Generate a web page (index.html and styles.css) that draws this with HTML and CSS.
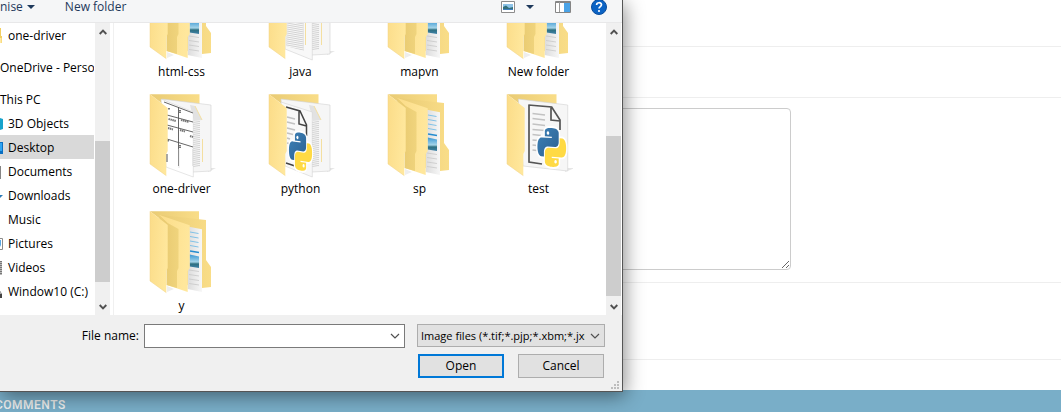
FILE: index.html
```html
<!DOCTYPE html>
<html lang="en">
<head>
<meta charset="utf-8">
<title>Upload</title>
<link rel="stylesheet" href="styles.css">
</head>
<body>
<svg class="defs" aria-hidden="true">
  <defs>
    <linearGradient id="flap" x1="0" y1="0" x2="1" y2="0.3"><stop offset="0" stop-color="#fbdc88"/><stop offset="1" stop-color="#ffe79c"/></linearGradient>
    <linearGradient id="back" x1="0" y1="0" x2="1" y2="0"><stop offset="0" stop-color="#e9cb74"/><stop offset="1" stop-color="#f9dd88"/></linearGradient>
    <linearGradient id="inner" x1="0" y1="0" x2="1" y2="0"><stop offset="0" stop-color="#e6c76d"/><stop offset="1" stop-color="#f0d47d"/></linearGradient>
    <linearGradient id="shade" x1="0" y1="0" x2="1" y2="0"><stop offset="0" stop-color="#dcdcdc"/><stop offset="1" stop-color="#f7f7f7"/></linearGradient>
    <linearGradient id="photo" x1="0" y1="0" x2="0" y2="1"><stop offset="0" stop-color="#3a97d4"/><stop offset="0.55" stop-color="#a5d4e8"/><stop offset="0.7" stop-color="#2d6f80"/><stop offset="1" stop-color="#3f82a8"/></linearGradient>
    <linearGradient id="pyblue" x1="0" y1="0" x2="1" y2="1"><stop offset="0" stop-color="#3d82b8"/><stop offset="1" stop-color="#2b5f90"/></linearGradient>
    <pattern id="textlines" width="20" height="2" patternUnits="userSpaceOnUse" patternTransform="skewY(10)"><path d="M0 .5H20" stroke="#cfcfcf" stroke-width=".9"/></pattern>
    <path id="pyhalf" d="M14.25.18l.9.2.73.26.59.3.45.32.34.34.25.34.16.33.1.3.04.26.02.2-.01.13V8.5l-.05.63-.13.55-.21.46-.26.38-.3.31-.33.25-.35.19-.35.14-.33.1-.3.07-.26.04-.21.02H8.77l-.69.05-.59.14-.5.22-.41.27-.33.32-.27.35-.2.36-.15.37-.1.35-.07.32-.04.27-.02.21v3.06H3.17l-.21-.03-.28-.07-.32-.12-.35-.18-.36-.26-.36-.36-.35-.46-.32-.59-.28-.73-.21-.88-.14-1.05-.05-1.23.06-1.22.16-1.04.24-.87.32-.71.36-.57.4-.44.42-.33.42-.24.4-.16.36-.1.32-.05.24-.01h.16l.06.01h8.16v-.83H6.18l-.01-2.75-.02-.37.05-.34.11-.31.17-.28.25-.26.31-.23.38-.2.44-.18.51-.15.58-.12.64-.1.71-.06.77-.04.84-.02 1.27.05z"/>
    <g id="pylogo">
      <g stroke="#fff" stroke-width="2.4" stroke-linejoin="round" fill="#fff"><use href="#pyhalf"/><use href="#pyhalf" transform="rotate(180 12 12)"/></g>
      <use href="#pyhalf" fill="url(#pyblue)"/><use href="#pyhalf" transform="rotate(180 12 12)" fill="#ffda44"/>
      <circle cx="8.8" cy="3.3" r="1.1" fill="#fff"/><circle cx="15.2" cy="20.7" r="1.1" fill="#fff"/>
    </g>
    <g id="frontflap"><path d="M2 .3 19.7 14V57L18.3 60V81.7L2 70Z" fill="url(#flap)"/><path d="M2 .3V70L18.3 81.7" fill="none" stroke="#f0d285" stroke-width=".5"/></g>
    <g id="rearpages">
      <path d="M2 .3H51.5V14H20Z" fill="url(#back)"/>
      <path d="M60 74 68 74 60 78Z" fill="#e6e6e6"/>
      <path d="M14 5 63 11V77L45 78 18 70Z" fill="#f6f6f6" stroke="#d2d2d2" stroke-width=".6"/>
      <path d="M42 11 47 12 54 26 46 27Z" fill="#e2e2e2"/>
      <path d="M47 12 54 26" stroke="#f4dfa0" stroke-width="1"/>
      <path d="M44 27H52V73H44Z" fill="url(#textlines)"/>
      <path d="M54.500 45V68" stroke="#f4dfa0"/>
    </g>
  </defs>
  <symbol id="folder-nested" viewBox="0 0 68 84">
    <path d="M2 .3H51V14H20Z" fill="url(#back)"/>
    <path d="M10.700 3.700 58 9V49L63 56V76L45 78 20 60Z" fill="url(#back)"/>
    <path d="M41 15.700 54 18.300V81L39.700 78Z" fill="url(#shade)"/>
    <g fill="none" stroke="#75bde6" stroke-width=".9"><path d="M42 21 50.500 22.500M42 25.500 50.500 27M42 30 50.500 31.500M42 34.500 50.500 36"/><path d="M42 40 51 41.500" stroke="#258ccf" stroke-width="1.400"/></g>
    <path d="M41.700 43.500 51 45.500V57L41.700 55.500Z" fill="url(#photo)"/>
    <path d="M41 59 51 60.500M41 63.500 51 65M41 68 51 69.500M41 72.500 51 74" stroke="#c8c8c8" stroke-width=".8"/>
    <path d="M10.700 3.700 41.700 14.300V57L39.700 60V81L19 74V14Z" fill="url(#flap)"/>
    <path d="M10.700 3.700 19.700 12 30.500 18V57L29 60V77L18.500 74V14Z" fill="url(#inner)"/>
    <path d="M19 75 26 78 19 81Z" fill="#eeeeee"/>
    <use href="#frontflap"/>
  </symbol>
  <symbol id="folder-text" viewBox="0 0 68 84">
    <use href="#rearpages"/>
    <path d="M18 12 45.300 18V83L18 72Z" fill="#f8f8f8" stroke="#d2d2d2" stroke-width=".6"/>
    <path d="M20 17 37 21V74L19 69Z" fill="url(#textlines)"/><path d="M38.500 38V68" stroke="#f4dfa0"/>
    <use href="#frontflap"/>
  </symbol>
  <symbol id="folder-table" viewBox="0 0 68 84">
    <use href="#rearpages"/>
    <path d="M13 5 45.300 18V83L18 73Z" fill="#fff" stroke="#ccc" stroke-width=".5"/>
    <g stroke="#555" stroke-width=".9" fill="none"><path d="M16 8 45 19M19 21 45 28M19 31 45 38M19 45 45 53M30.500 13V72" /></g>
    <path d="M20.500 25 28 27M33 26 41 28M20 34 25 35.500M32 36 37 37.500M42 42 45 43M21 14V16M32 16V19M32 51V54M20 46V48" stroke="#777" stroke-width="2" stroke-dasharray="1.500 .5"/>
    <path d="M31 55V74M44.500 55V72" stroke="#ddd" stroke-width=".7"/>
    <use href="#frontflap"/>
    <path d="M19 60V68" stroke="#555" stroke-width="1"/>
  </symbol>
  <symbol id="folder-python" viewBox="0 0 68 84">
    <use href="#rearpages"/>
    <path d="M14 8 45.300 18V83L18 72Z" fill="#f8f8f8" stroke="#d2d2d2" stroke-width=".6"/>
    <path d="M19 13 33 17 39.500 31V42M32 17V30L39.500 32M19 69 28 72" fill="none" stroke="#444" stroke-width="1.500"/>
    <path d="M20 23 28 25M20 28 28 30M20 34 28 36M20 39 26 40.500M20 44 23 45M20 49 22 49.500" stroke="#c2c2c2" stroke-width="1.600"/>
    <use href="#pylogo" transform="matrix(.96 .14 0 1.580 22 37)"/>
    <use href="#frontflap"/>
  </symbol>
  <symbol id="folder-script" viewBox="0 0 68 84">
    <path d="M2 .3H51.500V14H20Z" fill="url(#back)"/>
    <path d="M60 74 70 74 60 78Z" fill="#e6e6e6"/>
    <path d="M13.300 5 62.700 11V77L18 72Z" fill="#f6f6f6" stroke="#d2d2d2" stroke-width=".6"/>
    <path d="M23.300 11 46.700 13 55 26V36M46 13V26L55 27M24 11V68L37 70" fill="none" stroke="#555" stroke-width="1.700"/>
    <path d="M27.500 19.500 40 21M27.500 24.500 40 26M27.500 30 40 31.500M27.500 35.500 40 36.500M27.500 40.500 36 41.500M27.500 46 33 46.500M27.500 51 32 51.500M27.500 56 32 56.500" stroke="#c2c2c2" stroke-width="1.700"/>
    <use href="#pylogo" transform="matrix(1.190 .08 0 1.620 32.500 33)"/>
    <use href="#frontflap"/>
  </symbol>
  <symbol id="chev-up" viewBox="0 0 8 6"><path d="M.7 5 4 1.600 7.300 5" fill="none" stroke="#505050" stroke-width="1.900"/></symbol>
  <symbol id="chev-down" viewBox="0 0 8 6"><path d="M.7 1 4 4.400 7.300 1" fill="none" stroke="#505050" stroke-width="1.900"/></symbol>
  <symbol id="chev-thin" viewBox="0 0 10 6"><path d="M1 1 5 5 9 1" fill="none" stroke="#505050" stroke-width="1.200"/></symbol>
  <symbol id="caret" viewBox="0 0 8 4"><path d="M0 0H8L4 4Z" fill="#1e395b"/></symbol>
</svg>

<main class="page">
  <div class="row row-first"></div>
  <div class="row row-short"></div>
  <div class="row row-text"><textarea class="field" aria-label="Content"></textarea></div>
  <div class="row row-tall"></div>
  <div class="row-last"></div>
  <h2 class="band">Comments</h2>
</main>

<section class="dialog" role="dialog" aria-label="Open">
  <header class="toolbar">
    <button class="tool">nise <svg class="caret"><use href="#caret"/></svg></button>
    <button class="tool new-folder">New folder</button>
    <div class="views">
      <button class="tool" aria-label="Change view">
        <svg width="14" height="12" viewBox="0 0 14 12"><path d="M.5.500H13.500V11.500H.5Z" fill="#fff" stroke="#8c8c8c"/><path d="M2 3H12V9H2Z" fill="#8dc3e8"/><path d="M2 6 5 4.500 8 7 12 6V9H2Z" fill="#34707b"/><path d="M2 8H12V9H2Z" fill="#3f7fbf"/></svg>
      </button>
      <button class="tool more" aria-label="More options"><svg class="caret"><use href="#caret"/></svg></button>
      <button class="tool pane" aria-label="Preview pane">
        <svg width="16" height="12" viewBox="0 0 16 12"><path d="M.5.500H15.500V11.500H.5Z" fill="#fff" stroke="#858585"/><path d="M1 1.500H15" stroke="#858585"/><path d="M4.500 1V11" stroke="#999"/><path d="M9 2H15V11H9Z" fill="#4ba3e6"/></svg>
      </button>
      <button class="tool help" aria-label="Help">
        <svg width="16" height="16" viewBox="0 0 16 16"><circle cx="8" cy="8" r="7.500" fill="#0b63c4" stroke="#0a4d9c"/><path d="M5.600 6C5.600 3 10.500 3 10.500 5.800 10.500 7.600 8 7.600 8 9.600" fill="none" stroke="#fff" stroke-width="1.700"/><circle cx="8" cy="12" r="1.100" fill="#fff"/></svg>
      </button>
    </div>
  </header>

  <div class="panes">
    <nav class="tree">
      <a class="node" href="#"><svg class="edge" viewBox="0 0 4 16"><path d="M0 0H1V8H2V15H0Z" fill="#f2cf62"/><path d="M0 10H1.500V15H0Z" fill="#ffe9a2"/></svg>one-driver</a>
      <a class="node root" href="#">OneDrive - Personal</a>
      <a class="node root" href="#">This PC</a>
      <a class="node" href="#"><svg class="edge" viewBox="0 0 4 16"><path d="M0 2 3 3V13L0 14Z" fill="#18a3cc"/></svg>3D Objects</a>
      <a class="node selected" href="#"><svg class="edge" viewBox="0 0 4 16"><path d="M0 2H3V14H0Z" fill="#0a6fc2"/><path d="M0 3H2V11H0Z" fill="#2fa4f2"/></svg>Desktop</a>
      <a class="node" href="#"><svg class="edge" viewBox="0 0 4 16"><path d="M0 2H1V15H0Z" fill="#858585"/></svg>Documents</a>
      <a class="node" href="#"><svg class="edge" viewBox="0 0 4 16"><path d="M0 7H3L0 10Z" fill="#2a7ab8"/></svg>Downloads</a>
      <a class="node" href="#"><svg class="edge" viewBox="0 0 4 16"></svg>Music</a>
      <a class="node" href="#"><svg class="edge" viewBox="0 0 4 16"><path d="M-1 2.500H2.500V13.500H-1Z" fill="#fff" stroke="#8c8c8c"/><path d="M0 4H1V9L0 11Z" fill="#5aaae8"/></svg>Pictures</a>
      <a class="node" href="#"><svg class="edge" viewBox="0 0 4 16"><path d="M0 1H2V15H0Z" fill="#777"/><path d="M1 2V15" stroke="#fff" stroke-dasharray="1 1"/></svg>Videos</a>
      <a class="node" href="#"><svg class="edge" viewBox="0 0 4 16"><path d="M0 7 2 10V14H0Z" fill="#444"/><path d="M0 7 2 10H0Z" fill="#aaa"/></svg>Window10 (C:)</a>
    </nav>
    <div class="scroll tree-scroll"><svg><use href="#chev-up"/></svg><div class="track"><div class="thumb"></div></div><svg><use href="#chev-down"/></svg></div>
    <div class="files">
      <ul class="grid">
        <li class="file"><svg><use href="#folder-nested"/></svg><span>html-css</span></li>
        <li class="file"><svg><use href="#folder-text"/></svg><span>java</span></li>
        <li class="file"><svg><use href="#folder-nested"/></svg><span>mapvn</span></li>
        <li class="file"><svg><use href="#folder-nested"/></svg><span>New folder</span></li>
        <li class="file"><svg><use href="#folder-table"/></svg><span>one-driver</span></li>
        <li class="file"><svg><use href="#folder-python"/></svg><span>python</span></li>
        <li class="file"><svg><use href="#folder-nested"/></svg><span>sp</span></li>
        <li class="file"><svg><use href="#folder-script"/></svg><span>test</span></li>
        <li class="file"><svg><use href="#folder-nested"/></svg><span>y</span></li>
      </ul>
    </div>
    <div class="scroll file-scroll"><svg><use href="#chev-up"/></svg><div class="track"><div class="thumb"></div></div><svg><use href="#chev-down"/></svg></div>
  </div>

  <footer class="actions">
    <div class="line">
      <label for="filename">File name:</label>
      <div class="combo"><input id="filename" type="text"><button aria-label="Recent names"><svg class="thin"><use href="#chev-thin"/></svg></button></div>
      <div class="filter"><select aria-label="File type"><option>Image files (*.tif;*.pjp;*.xbm;*.jxl)</option></select><svg class="thin"><use href="#chev-thin"/></svg></div>
    </div>
    <div class="line buttons">
      <button class="btn primary">Open</button>
      <button class="btn">Cancel</button>
    </div>
    <svg class="grip" viewBox="0 0 8 8"><path d="M6 0H8V2H6ZM3 3H5V5H3ZM6 3H8V5H6ZM0 6H2V8H0ZM3 6H5V8H3ZM6 6H8V8H6Z" fill="#bdbdbd"/></svg>
  </footer>
</section>
</body>
</html>
```
FILE: styles.css
```css
* { box-sizing: border-box; }
html { overflow: hidden; }
body { margin: 0; background: #fff; font: 12px/16px "Open Sans", "Noto Sans", sans-serif; color: #000; }
.defs { position: absolute; width: 0; height: 0; }
button { font: inherit; padding: 0; border: 0; background: none; }
svg { display: block; flex: none; }

.page { display: flex; flex-direction: column; }
.row { border-bottom: 1px solid #eee; }
.row-first { height: 47px; }
.row-short { height: 51px; }
.row-text { display: flex; padding: 10px 270px 12px 160px; }
.row-tall { height: 77px; }
.row-last { height: 30px; }
.field { flex: 1; height: 162px; border: 1px solid #ccc; border-radius: 4px; background: #fff; resize: both; }
.band { margin: 0; padding: 7px 0 8px; min-height: 40px; background: #79aec8; color: #eee; font: 500 12px/16px Roboto, sans-serif; letter-spacing: 0.5px; text-transform: uppercase; text-indent: -5px; }

.dialog { position: absolute; top: 0; left: 0; width: min(623px, 100%); border: solid #555; border-width: 0 1px 1px 0; background: #f0f0f0; box-shadow: 2px 4px 18px rgba(0, 0, 0, .45); }
.toolbar { display: flex; align-items: center; height: 23px; padding: 0 15px 8px 0; background: #f5f6f7; border-bottom: 1px solid #e8e8e9; color: #1e395b; }
.tool { display: flex; align-items: center; gap: 4px; color: inherit; }
.caret { width: 8px; height: 4px; }
.new-folder { margin-left: 30px; }
.views { display: flex; align-items: center; margin-left: auto; }
.more { margin-left: 11px; }
.pane { margin-left: 21px; }
.help { margin-left: 20px; }

.panes { display: flex; height: 292px; background: #fff; }
.tree { width: 94px; overflow: hidden; }
.node { display: flex; align-items: center; gap: 4px; height: 24px; padding-top: 1px; color: #000; text-decoration: none; white-space: nowrap; }
.node.root { margin: 8px 0; }
.root + .root { margin-bottom: 0; }
.node.selected { background: #d9d9d9; }
.edge { width: 4px; height: 16px; }
.scroll { display: flex; flex-direction: column; align-items: center; justify-content: space-between; width: 15px; padding: 6px 0 5px; background: #f0f0f0; }
.scroll svg { width: 8px; height: 6px; }
.track { flex: 1; width: 100%; }
.thumb { background: #cdcdcd; }
.tree-scroll { margin: 0 3px 0 1px; }
.tree-scroll .thumb { height: 141px; margin-top: 106px; }
.file-scroll { margin-right: 1px; }
.file-scroll .thumb { height: 160px; margin-top: 101px; }
.files { display: flex; flex: 1; align-items: flex-end; border-left: 1px solid #f0f0f0; overflow: hidden; }
.grid { display: grid; grid-template-columns: repeat(4, 119px); gap: 13px 0; margin: 0; padding: 0 0 0 8px; list-style: none; }
.file { display: flex; flex-direction: column; align-items: center; }
.file svg { width: 68px; height: 84px; }
.file span { height: 20px; line-height: 22px; }

.actions { position: relative; padding: 9px 17px 13px 0; }
.line { display: flex; justify-content: flex-end; align-items: flex-start; }
.line label { line-height: 24px; margin-right: 5px; }
.combo { display: flex; align-items: center; width: 261px; height: 24px; padding-right: 4px; border: 1px solid #7a7a7a; background: #fff; }
.combo input { flex: 1; min-width: 0; height: 100%; border: 0; background: none; font: inherit; outline: 0; }
.thin { width: 10px; height: 6px; }
.filter { display: flex; align-items: center; width: 188px; height: 23px; margin-left: 12px; padding: 0 4px 0 3px; border: 1px solid #adadad; background: #e1e1e1; }
.filter select { flex: 1; min-width: 0; margin-right: 5px; padding: 0; border: 0; background: none; color: #000; font: inherit; font-size: 11px; appearance: none; overflow: hidden; text-overflow: clip; }
.buttons { gap: 14px; margin-top: 6px; padding-right: 1px; }
.btn { width: 86px; height: 24px; border: 1px solid #adadad; background: #e1e1e1; color: #000; }
.btn.primary { border: 2px solid #0078d7; }
.grip { position: absolute; right: 3px; bottom: 2px; width: 8px; height: 8px; }
```
